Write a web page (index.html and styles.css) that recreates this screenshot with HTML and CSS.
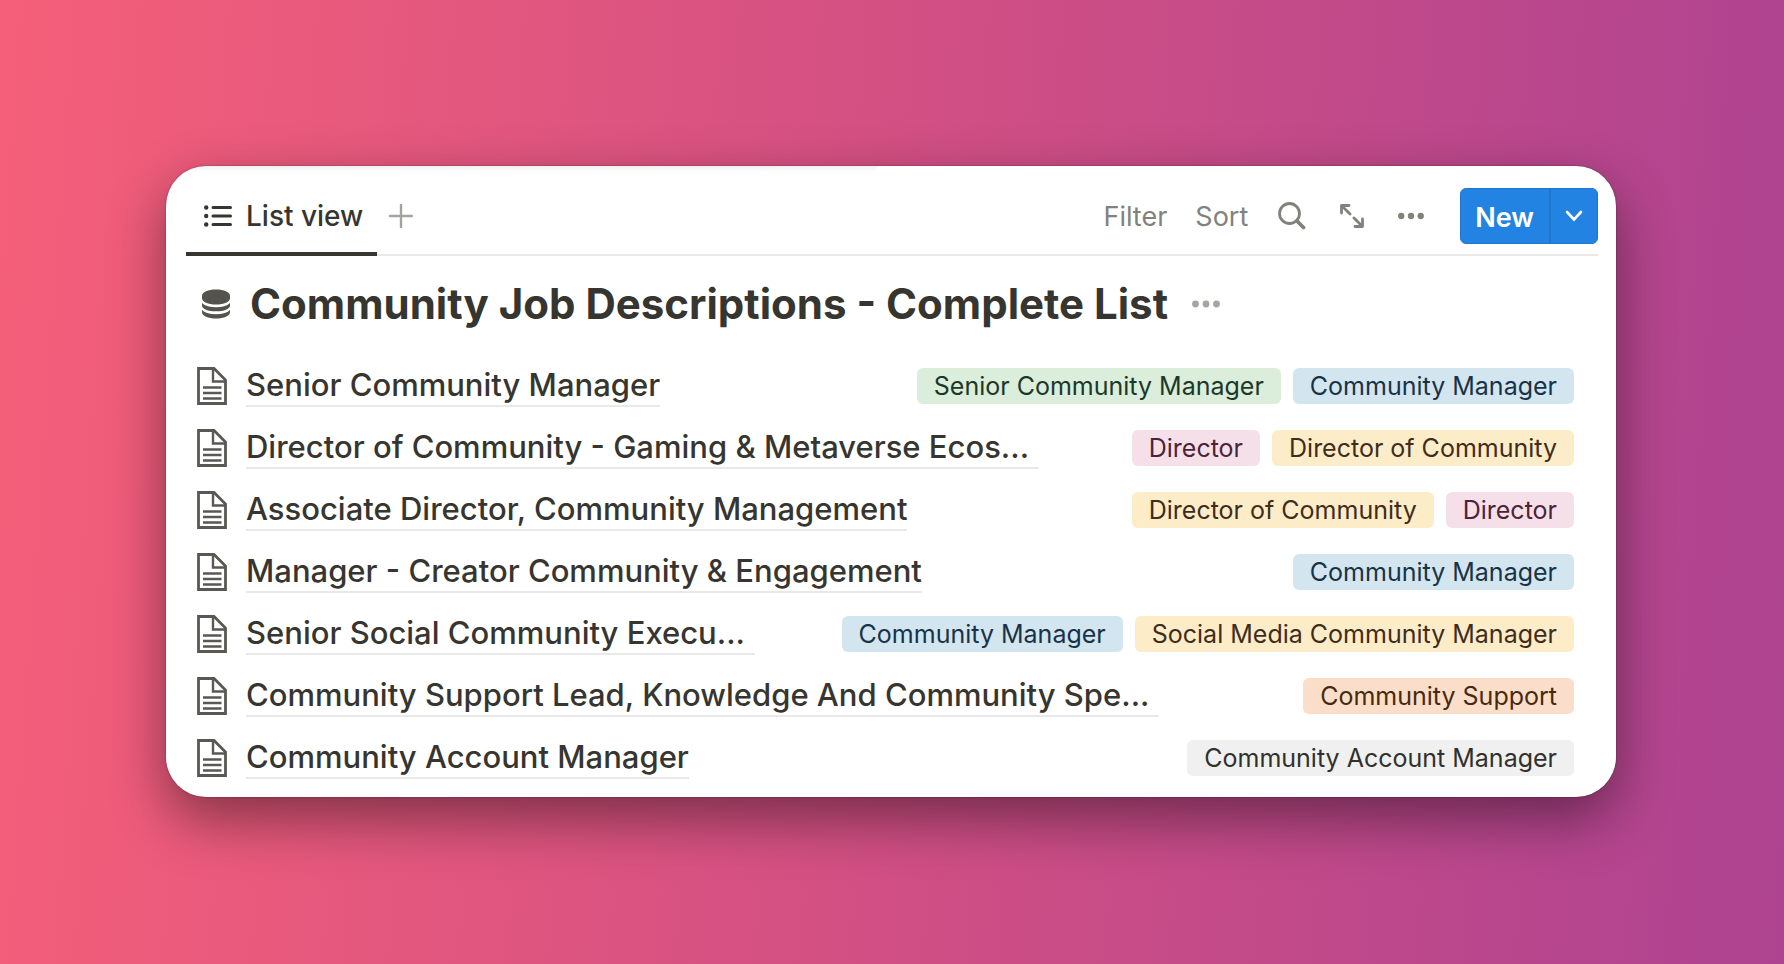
FILE: index.html
```
<!DOCTYPE html>
<html lang="en">
<head>
<meta charset="utf-8">
<title>Community Job Descriptions</title>
<link rel="stylesheet" href="styles.css">
</head>
<body>
<svg class="sprite" aria-hidden="true">
  <symbol id="page" viewBox="0 0 30 38">
    <path d="M1.500 1.500H17L28.500 13V36.500H1.500Z" fill="none" stroke="currentColor" stroke-width="2.800"/>
    <path d="M16 1.500V14.500H28.500" fill="none" stroke="currentColor" stroke-width="2.400"/>
    <path d="M6 20.500H24.500M6 26H24.500M6 31.500H24.500" stroke="currentColor" stroke-width="2.300"/>
  </symbol>
  <symbol id="dots" viewBox="0 0 28 8">
    <circle cx="3.500" cy="4" r="3.400"/><circle cx="14" cy="4" r="3.400"/><circle cx="24.500" cy="4" r="3.400"/>
  </symbol>
</svg>
<main class="card">
  <header class="toolbar">
    <nav class="tabs">
      <button class="tab" type="button">
        <svg width="28" height="22" viewBox="0 0 28 22" aria-hidden="true"><g fill="currentColor"><circle cx="2.200" cy="2.500" r="2.200"/><circle cx="2.200" cy="11" r="2.200"/><circle cx="2.200" cy="19.500" r="2.200"/></g><path d="M9 2.500H26.500M9 11H26.500M9 19.500H26.500" stroke="currentColor" stroke-width="3" stroke-linecap="round"/></svg>
        List view
      </button>
      <button class="add" type="button" aria-label="Add view">
        <svg width="24" height="24" viewBox="0 0 24 24" aria-hidden="true"><path d="M12 1V23M1 12H23" stroke="currentColor" stroke-width="2.400" stroke-linecap="round"/></svg>
      </button>
    </nav>
    <div class="actions">
      <button class="action" type="button">Filter</button>
      <button class="action" type="button">Sort</button>
      <button class="action search" type="button" aria-label="Search">
        <svg width="28" height="28" viewBox="0 0 28 28" fill="none" stroke="currentColor" stroke-linecap="round" aria-hidden="true"><circle cx="11.500" cy="11.500" r="10" stroke-width="2.800"/><path d="M19 19L25.500 25.500" stroke-width="3.800"/></svg>
      </button>
      <button class="action expand" type="button" aria-label="Expand">
        <svg width="24" height="24" viewBox="0 0 24 24" fill="none" stroke="currentColor" stroke-width="2.800" stroke-linecap="round" stroke-linejoin="round" aria-hidden="true"><path d="M1.500 9V1.500H9M1.500 1.500L10 10M22.500 15V22.500H15M22.500 22.500L14 14"/></svg>
      </button>
      <button class="action more" type="button" aria-label="More options">
        <svg width="26" height="8" fill="currentColor" aria-hidden="true"><use href="#dots"/></svg>
      </button>
      <div class="split">
        <button class="new" type="button">New</button>
        <button class="caret" type="button" aria-label="New from template">
          <svg width="18" height="12" viewBox="0 0 18 12" aria-hidden="true"><path d="M2 2L9 9.500L16 2" fill="none" stroke="currentColor" stroke-width="2.600" stroke-linecap="round"/></svg>
        </button>
      </div>
    </div>
  </header>

  <div class="heading">
    <svg width="28" height="30" viewBox="0 0 28 30" fill="#55534e" aria-hidden="true"><path d="M0 7C0 3 6 .5 14 .5S28 3 28 7V9C28 13 22 15.500 14 15.500S0 13 0 9Z"/><path d="M0 14C3 17 8 18.200 14 18.200S25 17 28 14V16.500C28 20 22 22.300 14 22.300S0 20 0 16.500Z"/><path d="M0 21C3 24 8 25.200 14 25.200S25 24 28 21V23C28 27 22 29.500 14 29.500S0 27 0 23Z"/></svg>
    <h1>Community Job Descriptions - Complete List</h1>
    <button class="title-more" type="button" aria-label="Database options">
      <svg width="28" height="8" fill="currentColor" aria-hidden="true"><use href="#dots"/></svg>
    </button>
  </div>

  <ul class="list">
    <li class="row">
      <svg class="page" aria-hidden="true"><use href="#page"/></svg>
      <a class="name" href="#">Senior Community Manager</a>
      <span class="tags"><span class="tag green">Senior Community Manager</span><span class="tag blue">Community Manager</span></span>
    </li>
    <li class="row">
      <svg class="page" aria-hidden="true"><use href="#page"/></svg>
      <a class="name cut" href="#">Director of Community - Gaming &amp; Metaverse Ecos...</a>
      <span class="tags"><span class="tag pink">Director</span><span class="tag yellow">Director of Community</span></span>
    </li>
    <li class="row">
      <svg class="page" aria-hidden="true"><use href="#page"/></svg>
      <a class="name" href="#">Associate Director, Community Management</a>
      <span class="tags"><span class="tag yellow">Director of Community</span><span class="tag pink">Director</span></span>
    </li>
    <li class="row">
      <svg class="page" aria-hidden="true"><use href="#page"/></svg>
      <a class="name" href="#">Manager - Creator Community &amp; Engagement</a>
      <span class="tags"><span class="tag blue">Community Manager</span></span>
    </li>
    <li class="row">
      <svg class="page" aria-hidden="true"><use href="#page"/></svg>
      <a class="name cut" href="#">Senior Social Community Execu...</a>
      <span class="tags"><span class="tag blue">Community Manager</span><span class="tag yellow">Social Media Community Manager</span></span>
    </li>
    <li class="row">
      <svg class="page" aria-hidden="true"><use href="#page"/></svg>
      <a class="name cut" href="#">Community Support Lead, Knowledge And Community Spe...</a>
      <span class="tags"><span class="tag orange">Community Support</span></span>
    </li>
    <li class="row">
      <svg class="page" aria-hidden="true"><use href="#page"/></svg>
      <a class="name" href="#">Community Account Manager</a>
      <span class="tags"><span class="tag gray">Community Account Manager</span></span>
    </li>
  </ul>
</main>
</body>
</html>
```
FILE: styles.css
```
* {
  box-sizing: border-box;
}

body {
  margin: 0;
  min-height: 100vh;
  padding: 166px 168px 166px 166px;
  font-family: Inter, "Liberation Sans", sans-serif;
  color: #37352f;
  background: linear-gradient(94deg, #f55f79 0%, #d35083 48%, #ae4391 100%);
}

button {
  display: flex;
  align-items: center;
  padding: 0;
  border: 0;
  background: none;
  color: inherit;
  font: inherit;
}

.sprite {
  position: absolute;
  width: 0;
  height: 0;
}

.card {
  padding: 22px 18px 8px 20px;
  border-radius: 40px;
  background: linear-gradient(#f1f1f1, #fff) 0 0 / 49% 6px no-repeat #fff;
  box-shadow: 0 0 2px rgba(0, 0, 0, 0.4), 0 22px 56px rgba(0, 0, 0, 0.44);
}

.toolbar {
  display: flex;
  justify-content: space-between;
  height: 68px;
  border-bottom: 2px solid #e9e9e7;
}

.tabs,
.actions {
  display: flex;
}

.tab {
  gap: 14px;
  height: 68px;
  padding: 0 14px 8px 18px;
  border-bottom: 4px solid #37352f;
  font-size: 28px;
  font-weight: 500;
}

.add {
  height: 56px;
  margin-left: 12px;
  color: #a4a39f;
}

.actions {
  height: 56px;
  color: #82817c;
}

.action {
  margin-right: 28px;
  font-size: 27px;
}

.search {
  margin: 0 34px 0 2px;
}

.expand {
  margin-right: 34px;
}

.more {
  margin-right: 36px;
}

.split {
  display: flex;
  border: 1px solid #1f76cc;
  border-radius: 6px;
  background: #2383e2;
  color: #fff;
}

.new {
  padding: 2px 15px 0 14px;
  border-right: 2px solid #1f76cc;
  font-size: 27px;
  font-weight: 600;
}

.caret {
  padding: 0 14px;
}

.heading {
  display: flex;
  align-items: center;
  gap: 20px;
  padding: 18px 16px 0;
}

h1 {
  margin: 0;
  font-size: 42px;
  font-weight: 700;
  line-height: 60px;
}

.title-more {
  margin-left: 4px;
  color: #a5a5a2;
}

.list {
  margin: 21px 24px 0 11px;
  padding: 0;
  list-style: none;
}

.row {
  display: flex;
  align-items: center;
  height: 62px;
}

.page {
  flex: none;
  width: 30px;
  height: 38px;
  margin-right: 19px;
  color: #5a5853;
}

.name {
  border-bottom: 2px solid #e9e9e7;
  color: inherit;
  font-size: 31px;
  font-weight: 500;
  line-height: 40px;
  text-decoration: none;
  white-space: nowrap;
}

.cut {
  padding-right: 10px;
}

.tags {
  display: flex;
  gap: 12px;
  margin-left: auto;
}

.tag {
  padding: 0 17px;
  border-radius: 6px;
  font-size: 25px;
  line-height: 36px;
  white-space: nowrap;
}

.green {
  background: #dbeddb;
  color: #1c3829;
}

.blue {
  background: #d3e5ef;
  color: #183347;
}

.pink {
  background: #f5e0e9;
  color: #4c2337;
}

.yellow {
  background: #fdecc8;
  color: #402c1b;
}

.orange {
  background: #fadec9;
  color: #49290e;
}

.gray {
  background: #f0f0f0;
  color: #32302c;
}
```
